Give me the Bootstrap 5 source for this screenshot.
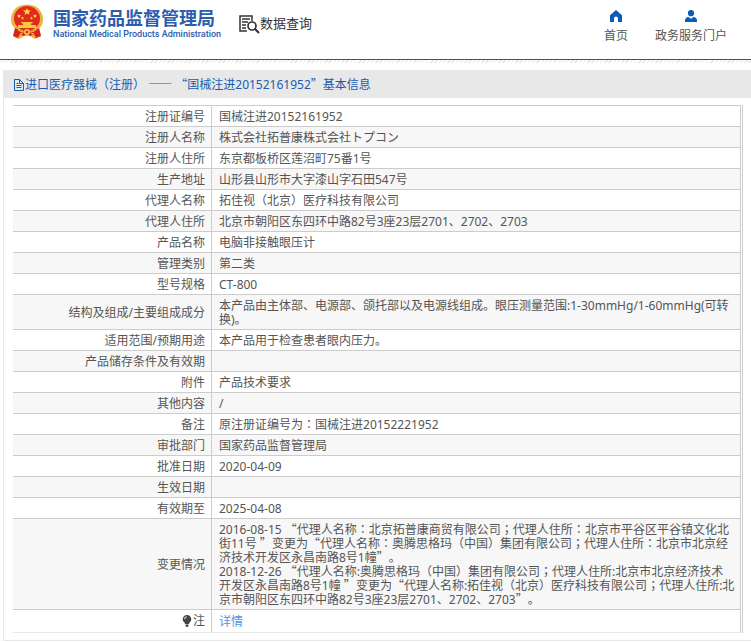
<!DOCTYPE html>
<html lang="zh-CN">
<head>
<meta charset="utf-8">
<meta name="viewport" content="width=device-width, initial-scale=1">
<title>国家药品监督管理局 数据查询</title>
<link href="https://cdn.jsdelivr.net/npm/bootstrap@5.3.0/dist/css/bootstrap.min.css" rel="stylesheet">
<style>
body{font-family:"Noto Sans","Noto Sans CJK SC",sans-serif;font-size:12px;line-height:14px;color:#555;background:#fff;text-spacing-trim:space-all}
.site-header{border-bottom:1px solid #1d5a9e;height:60px}
.hatch{height:3px;background:repeating-linear-gradient(135deg,#e2e6ea 0 1px,#fff 1px 3px)}
.brand-link{padding:4px 0 0 10px;color:#2c5cac;gap:9px}
.brand-link:hover{color:#2c5cac}
.brand-zh{font-family:"Noto Sans CJK SC",sans-serif;font-size:18px;line-height:20px;font-weight:700}
.brand-en{font-family:Roboto,sans-serif;font-size:9px;line-height:14px;font-weight:500}
.brand-text{padding-top:3px}
.section-name{font-size:13px;line-height:18px;color:#333;margin:14px 0 0 18px}
.top-nav{gap:27px;padding:10px 24px 0 0}
.top-nav a{color:#555;gap:6px;line-height:16px}
.panel-frame{margin:7px 0 1px 3px;border:solid #e8e8e8;border-width:0 0 1px 1px}
.panel-title{background:#e8e8e8;color:#1a5cb0;font-size:12px;line-height:16px;padding:7px 9px 5px;font-weight:400}
.panel-content{padding:7px 8px 7px 9px}
.info-wrap{border-right:1px solid #ccc;padding-right:1px}
.info{width:100%;border-collapse:separate;border-spacing:0;border-right:1px solid #ccc;border-bottom:1px solid #e8e8e8}
.info th,.info td{border-top:1px solid #ccc;padding:4px 3px 2px;height:21px;vertical-align:middle}
.info th{width:199px;border-right:1px solid #ccc;text-align:right;font-weight:400;padding-right:6px}
.info td{padding-left:7px}
.info tr:nth-child(even){background:#f7f7f7}
.info tr:last-child>*{height:23px}
.info td a{color:#4a96e6}
.cjk,.mid{line-height:10px}
.cjk{font-family:"Noto Sans CJK SC",sans-serif}
.mid{font-family:"Noto Sans CJK TC",sans-serif}
</style>
</head>
<body>
<header>
<div class="site-header d-flex align-items-start">
<a href="#" class="brand-link d-flex text-decoration-none">
<svg width="34" height="36" viewBox="0 0 34 36" aria-hidden="true">
<path d="M5 24 2 21Q0 15 2 10 5 2 13 1Q17 0 21 1 29 2 32 10 34 15 32 21L29 25 31 32 25 35 20 32 14 32 9 35 4 33Z" fill="#e9b43c"/>
<ellipse cx="17" cy="14.500" rx="13" ry="12.500" fill="#e02a20"/>
<path d="m17 4 1 2.500h3l-2.300 1.700.9 2.800-2.600-1.700-2.600 1.700.9-2.800L13 6.500h3Z" fill="#ffdc3c"/>
<path d="m9 10 .6 1.200 1.400.2-1 1 .2 1.300L9 13l-1.200.7.2-1.300-1-1 1.400-.2Zm16 0 .6 1.200 1.400.2-1 1 .2 1.300L25 13l-1.200.7.2-1.300-1-1 1.400-.2ZM12.500 12.500l.5 1 1 .2-.8.7.2 1-.9-.5-.9.5.2-1-.8-.7 1-.2Zm9 0 .5 1 1 .2-.8.7.2 1-.9-.5-.9.5.2-1-.8-.7 1-.2Z" fill="#ffdc3c"/>
<path d="M11 18h12l-1 1.500h-1V21h5v3H8v-3h5v-1.500h-1Z" fill="#f6ca3c"/>
<path d="M5 24q5 3 8 3l4-2 4 2q4 0 8-3l2 8-5 2-2-4-4 2-3-3-3 3-4-2-2 4-5-2Z" fill="#d9241d"/>
<path d="M8 26q3 2 6 2M26 26q-3 2-6 2M10 30l3-1M24 30l-3-1" stroke="#f6ca3c" fill="none"/>
<circle cx="17" cy="28" r="3" fill="#f2c23c"/><circle cx="17" cy="28" r="1.200" fill="#d9241d"/>
</svg>
<span class="brand-text d-flex flex-column"><span class="brand-zh">国家药品监督管理局</span><span class="brand-en">National Medical Products Administration</span></span>
</a>
<div class="section-name d-flex">
<svg width="21" height="20" viewBox="0 0 21 20" fill="none" stroke="#333" aria-hidden="true"><path d="M8 17H1V2h12v5" stroke-width="1.500"/><path d="M3 5h8M3 8h6M3 11h4M3 14h4" stroke-width="1.300"/><circle cx="13" cy="12" r="4" stroke-width="1.700"/><path d="m16 15 4 4" stroke-width="2.200"/></svg>
<span>数据查询</span></div>
<nav class="top-nav d-flex ms-auto">
<a href="#" class="d-flex flex-column align-items-center text-decoration-none"><svg width="14" height="12" viewBox="0 0 14 12" aria-hidden="true"><path d="M7 0 1 5.200V12h4V8.500a2 2 0 0 1 4 0V12h4V5.200Z" fill="#0b5cb8"/></svg><span>首页</span></a>
<a href="#" class="d-flex flex-column align-items-center text-decoration-none"><svg width="14" height="12" viewBox="0 0 14 12" aria-hidden="true"><circle cx="7" cy="3.200" r="3.100" fill="#0b5cb8"/><path d="M1 12V10q0-2 3-3.200l3 2 3-2Q13 8 13 10v2Z" fill="#0b5cb8"/></svg><span>政务服务门户</span></a>
</nav>
</div>
<div class="hatch"></div>
</header>
<main class="panel-frame">
<h1 class="panel-title d-flex align-items-center m-0"><svg width="12" height="12" viewBox="0 0 12 12" fill="none" stroke="#1a5cb0" aria-hidden="true"><path d="M1.500.5h5l4 4v7h-9ZM6.500.5v4h4M3.500 4.500h2M3.500 6.500h5M3.500 8.500h5"/></svg><span>进口医疗器械（注册） <span class="cjk">——</span> <span class="cjk">“</span>国械注进20152161952<span class="cjk">”</span>基本信息</span></h1>
<div class="panel-content"><div class="info-wrap">
<table class="info">
<tbody>
<tr><th scope="row">注册证编号</th><td>国械注进20152161952</td></tr>
<tr><th scope="row">注册人名称</th><td>株式会社拓普康株式会社トプコン</td></tr>
<tr><th scope="row">注册人住所</th><td>东京都板桥区莲沼町75番1号</td></tr>
<tr><th scope="row">生产地址</th><td>山形县山形市大字漆山字石田547号</td></tr>
<tr><th scope="row">代理人名称</th><td>拓佳视（北京）医疗科技有限公司</td></tr>
<tr><th scope="row">代理人住所</th><td>北京市朝阳区东四环中路82号3座23层2701、2702、2703</td></tr>
<tr><th scope="row">产品名称</th><td>电脑非接触眼压计</td></tr>
<tr><th scope="row">管理类别</th><td>第二类</td></tr>
<tr><th scope="row">型号规格</th><td>CT-800</td></tr>
<tr><th scope="row">结构及组成/主要组成成分</th><td>本产品由主体部、电源部、颌托部以及电源线组成。眼压测量范围:1-30mmHg/1-60mmHg(可转换)。</td></tr>
<tr><th scope="row">适用范围/预期用途</th><td>本产品用于检查患者眼内压力。</td></tr>
<tr><th scope="row">产品储存条件及有效期</th><td></td></tr>
<tr><th scope="row">附件</th><td>产品技术要求</td></tr>
<tr><th scope="row">其他内容</th><td>/</td></tr>
<tr><th scope="row">备注</th><td>原注册证编号为<span class="mid" lang="zh-TW">：</span>国械注进20152221952</td></tr>
<tr><th scope="row">审批部门</th><td>国家药品监督管理局</td></tr>
<tr><th scope="row">批准日期</th><td>2020-04-09</td></tr>
<tr><th scope="row">生效日期</th><td></td></tr>
<tr><th scope="row">有效期至</th><td>2025-04-08</td></tr>
<tr><th scope="row">变更情况</th><td>2016-08-15 <span class="cjk">“</span>代理人名称<span class="mid" lang="zh-TW">：</span>北京拓普康商贸有限公司<span class="mid" lang="zh-TW">；</span>代理人住所<span class="mid" lang="zh-TW">：</span>北京市平谷区平谷镇文化北街11号 <span class="cjk">”</span>变更为<span class="cjk">“</span>代理人名称<span class="mid" lang="zh-TW">：</span>奥腾思格玛（中国）集团有限公司<span class="mid" lang="zh-TW">；</span>代理人住所<span class="mid" lang="zh-TW">：</span>北京市北京经济技术开发区永昌南路8号1幢<span class="cjk">”。</span><br>2018-12-26 <span class="cjk">“</span>代理人名称:奥腾思格玛（中国）集团有限公司<span class="mid" lang="zh-TW">；</span>代理人住所:北京市北京经济技术<br>开发区永昌南路8号1幢 <span class="cjk">”</span>变更为<span class="cjk">“</span>代理人名称:拓佳视（北京）医疗科技有限公司<span class="mid" lang="zh-TW">；</span>代理人住所:北京市朝阳区东四环中路82号3座23层2701、2702、2703<span class="cjk">”。</span></td></tr>
<tr><th scope="row"><span class="d-inline-flex align-items-center"><svg width="11" height="12" viewBox="0 0 11 12" aria-hidden="true"><path d="M5 0a4.200 4.200 0 0 1 2.500 7.600L7 9H3L2.500 7.600A4.200 4.200 0 0 1 5 0ZM3.500 9.500h3V11l-1 1h-1l-1-1Z" fill="#444"/><path d="M2.500 4Q2.700 2 4.700 1.800" stroke="#fff" fill="none"/></svg>注</span></th><td><a href="#" class="text-decoration-none">详情</a></td></tr>
</tbody>
</table>
</div></div>
</main>
<script src="https://cdn.jsdelivr.net/npm/bootstrap@5.3.0/dist/js/bootstrap.bundle.min.js"></script>
</body>
</html>
